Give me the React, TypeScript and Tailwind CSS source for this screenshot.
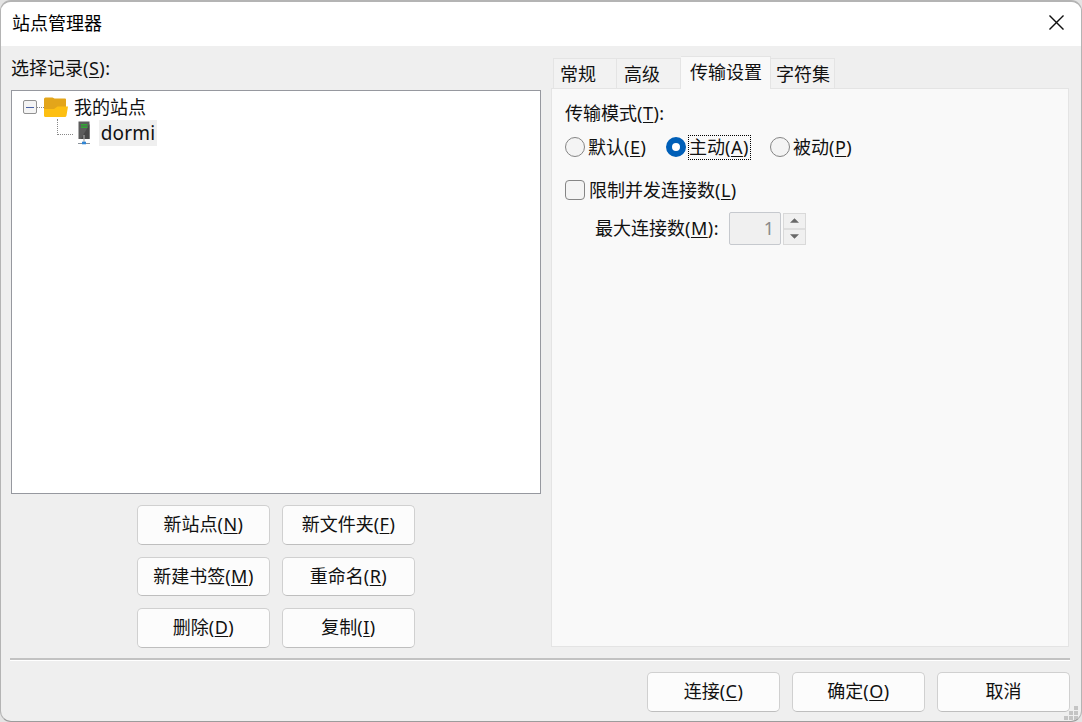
import React, { useState } from 'react';
import clsx from 'clsx';

interface LabelProps {
  text: string;
  hotkey?: string;
  suffix?: string;
  className?: string;
}

// Dialog label with an underlined access key, e.g. "Text(K):"
const Label: React.FC<LabelProps> = ({ text, hotkey, suffix, className }) => (
  <span className={clsx('whitespace-nowrap', className)}>
    {text}
    {hotkey && (
      <span className="tracking-[0.5px]">
        (<span className="underline decoration-1 underline-offset-2">{hotkey}</span>){suffix}
      </span>
    )}
  </span>
);

interface DialogButtonProps {
  text: string;
  hotkey?: string;
}

const DialogButton: React.FC<DialogButtonProps> = ({ text, hotkey }) => (
  <button className="flex h-[39.5px] w-[133px] items-center justify-center rounded-[5px] border border-[#d0d0d0] border-b-[#bebebe] bg-[#fcfcfc] pb-px">
    <Label text={text} hotkey={hotkey} />
  </button>
);

const FolderIcon = () => (
  <svg width="24" height="21" viewBox="0 0 24 21">
    <path d="M0 2Q0 .5 1.500 .5H8.500L10.500 1.500H21Q22 1.500 22 2.500V19H0Z" fill="#e3a51a" />
    <path d="M0 12H10L13.500 9.500H24L22.500 18.500Q22.300 20 20.800 20H1.500Q.3 20 0 19Z" fill="#fdbf12" />
  </svg>
);

const ServerIcon = () => (
  <svg width="12" height="24" viewBox="0 0 12 24">
    <rect x=".5" y=".5" width="11" height="17.500" fill="#5c5c5c" />
    <path d="M11.500 3V18H3Z" fill="#484848" />
    <path d="M3 3.700H9.500M3 6.300H9.500" stroke="#2fa832" strokeWidth="1.400" />
    <path d="M6 14V22" stroke="#aaa" strokeWidth="1.200" />
    <path d="M0 22.500H12" stroke="#8a9199" strokeWidth="1" />
    <rect x="4" y="20.700" width="4" height="2.600" fill="#2e86d6" />
  </svg>
);

const TABS = [
  { label: '常规', className: 'w-16 pl-[6px] border-l' },
  { label: '高级', className: 'w-16 pl-[7px]' },
  { label: '传输设置', className: 'w-[90px] pl-[9px] pb-[2px]' },
  { label: '字符集', className: 'w-16 pl-[5px]' },
];

const MODES = [
  { label: '默认', hotkey: 'E', className: 'w-[101px]' },
  { label: '主动', hotkey: 'A', className: 'w-[104px]' },
  { label: '被动', hotkey: 'P', className: 'w-[101px]' },
];

const SITE_ACTIONS = [
  { text: '新站点', hotkey: 'N' },
  { text: '新文件夹', hotkey: 'F' },
  { text: '新建书签', hotkey: 'M' },
  { text: '重命名', hotkey: 'R' },
  { text: '删除', hotkey: 'D' },
  { text: '复制', hotkey: 'I' },
];

const SiteTree = () => (
  <div className="mt-[10px] h-[404px] border border-[#96989f] bg-white">
    <div className="flex h-[31px] items-center pl-[11px] pt-px">
      <div className="flex h-[14px] w-[14px] items-center justify-center rounded-[2px] border border-[#919191] bg-[#f4f4f4]">
        <div className="h-px w-2 bg-[#4b63a7]" />
      </div>
      <div className="w-[7px] border-t border-dotted border-[#888]" />
      <FolderIcon />
      <Label text="我的站点" className="ml-[6px]" />
    </div>
    <div className="-mt-[3px] flex h-[27px] items-center pl-[45px]">
      <div className="-mt-[11px] h-[16px] w-4 border-b border-l border-dotted border-[#888]" />
      <div className="ml-[5px]">
        <ServerIcon />
      </div>
      <span className="ml-[9px] flex h-[26px] w-[58px] items-center justify-center bg-[#efefef] text-[19px] tracking-[0.2px]">dormi</span>
    </div>
  </div>
);

const TransferSettings = () => {
  const [mode, setMode] = useState('主动');
  const [limited, setLimited] = useState(false);

  return (
    <div className="h-[559px] border border-[#e4e4e4] bg-[#f9f9f9] pl-[13px] pt-[11px]">
      <div className="flex h-[25px] items-center">
        <Label text="传输模式" hotkey="T" suffix=":" />
      </div>
      <div className="mt-[9px] flex h-[26px]">
        {MODES.map((m) => (
          <button key={m.label} onClick={() => setMode(m.label)} className={clsx('flex items-center', m.className)}>
            <span
              className={clsx(
                'mr-[3px] h-5 w-5 shrink-0 rounded-full',
                mode === m.label ? 'border-[6px] border-[#005fb8] bg-white' : 'border border-[#858585] bg-[#f4f4f4]'
              )}
            />
            <span className={clsx('-ml-px flex h-[25px] items-center border border-dotted pr-px', mode === m.label ? 'border-black' : 'border-transparent')}>
              <Label text={m.label} hotkey={m.hotkey} />
            </span>
          </button>
        ))}
      </div>
      <button onClick={() => setLimited(!limited)} className="mt-[17px] flex h-[26px] items-center">
        <span className="mr-1 flex h-5 w-5 items-center justify-center rounded-[4px] border border-[#858585] bg-[#f4f4f4]">
          {limited && <span className="h-3 w-3 rounded-sm bg-[#005fb8]" />}
        </span>
        <Label text="限制并发连接数" hotkey="L" />
      </button>
      <div className="mt-2 flex h-[34px] items-center pl-[30px]">
        <Label text="最大连接数" hotkey="M" suffix=":" className="w-[134px]" />
        <div className="mt-px flex h-[33px] w-[52px] items-center justify-end rounded-[2px] border border-[#c6c9ce] bg-[#f0f0f0] pb-px pr-[6px] text-[#8a8a8a]">1</div>
        <div className="ml-[2px] mt-px flex h-[32px] w-[23px] flex-col border border-[#d9d9d9] bg-[#f0f0f0]">
          <div className="flex flex-1 items-center justify-center border-b-2 border-[#dedede]">
            <svg width="9" height="5" viewBox="0 0 10 5"><path d="M0 5L5 0L10 5Z" fill="#686868" /></svg>
          </div>
          <div className="flex flex-1 items-center justify-center">
            <svg width="9" height="5" viewBox="0 0 10 5"><path d="M0 0L5 5L10 0Z" fill="#686868" /></svg>
          </div>
        </div>
      </div>
    </div>
  );
};

const SizeGrip = () => (
  <svg width="14" height="14" viewBox="0 0 14 14" fill="#c4c4c4" className="absolute bottom-[1px] right-[3px]">
    <path d="M10 0h4v4h-4zM5 5h4v4H5zM10 5h4v4h-4zM0 10h4v4H0zM5 10h4v4H5zM10 10h4v4h-4z" />
  </svg>
);

const App: React.FC = () => {
  const [activeTab, setActiveTab] = useState('传输设置');

  return (
    <div className="h-[722px] w-[1082px] overflow-hidden bg-[#e4e4e4] font-['Noto_Sans','Noto_Sans_CJK_SC',sans-serif] text-[18px] leading-6 text-[#111]">
      <div className="relative flex h-full flex-col overflow-hidden rounded-[11px] border border-t-2 border-[#b4b4b4] border-b-[#9c9c9c] bg-[#efefef]">
        <header className="flex h-11 shrink-0 items-center justify-between bg-white pb-[3px] pl-[11px] pr-[17px]">
          <Label text="站点管理器" className="text-black" />
          <button aria-label="关闭">
            <svg width="15" height="15" viewBox="0 0 16 16" stroke="#111" strokeWidth="1.500">
              <path d="M.5 .5L15.500 15.500M15.500 .5L.5 15.500" />
            </svg>
          </button>
        </header>

        <main className="flex h-[612px] shrink-0 gap-[10px] pl-[9px]">
          <section className="w-[531px] pt-[9px] pl-px">
            <div className="flex h-[25px] items-center">
              <Label text="选择记录" hotkey="S" suffix=":" />
            </div>
            <SiteTree />
            <div className="mt-[11px] grid w-[278px] grid-cols-2 gap-x-3 gap-y-[12px] ml-[126px]">
              {SITE_ACTIONS.map((action) => (
                <DialogButton key={action.text} {...action} />
              ))}
            </div>
          </section>

          <section className="w-[518px] pt-[10px]">
            <div className="-mb-px flex h-[33px] items-end pl-[2px]">
              {TABS.map((tab) => (
                <button
                  key={tab.label}
                  onClick={() => setActiveTab(tab.label)}
                  className={clsx(
                    'flex items-center whitespace-nowrap border-r border-t border-[#e4e4e4]',
                    tab.className,
                    activeTab === tab.label ? 'relative h-[33px] bg-[#f9f9f9]' : 'h-[31px] border-b bg-[#f2f2f2]'
                  )}
                >
                  {tab.label}
                </button>
              ))}
            </div>
            <TransferSettings />
          </section>
        </main>

        <div className="ml-[9px] mr-[11px] h-[3px] shrink-0 border-b border-t-2 border-b-white border-t-[#c2c2c2]" />

        <footer className="flex justify-end gap-3 pr-[11px] pt-[11px]">
          <DialogButton text="连接" hotkey="C" />
          <DialogButton text="确定" hotkey="O" />
          <DialogButton text="取消" />
        </footer>
        <SizeGrip />
      </div>
    </div>
  );
};

export default App;
